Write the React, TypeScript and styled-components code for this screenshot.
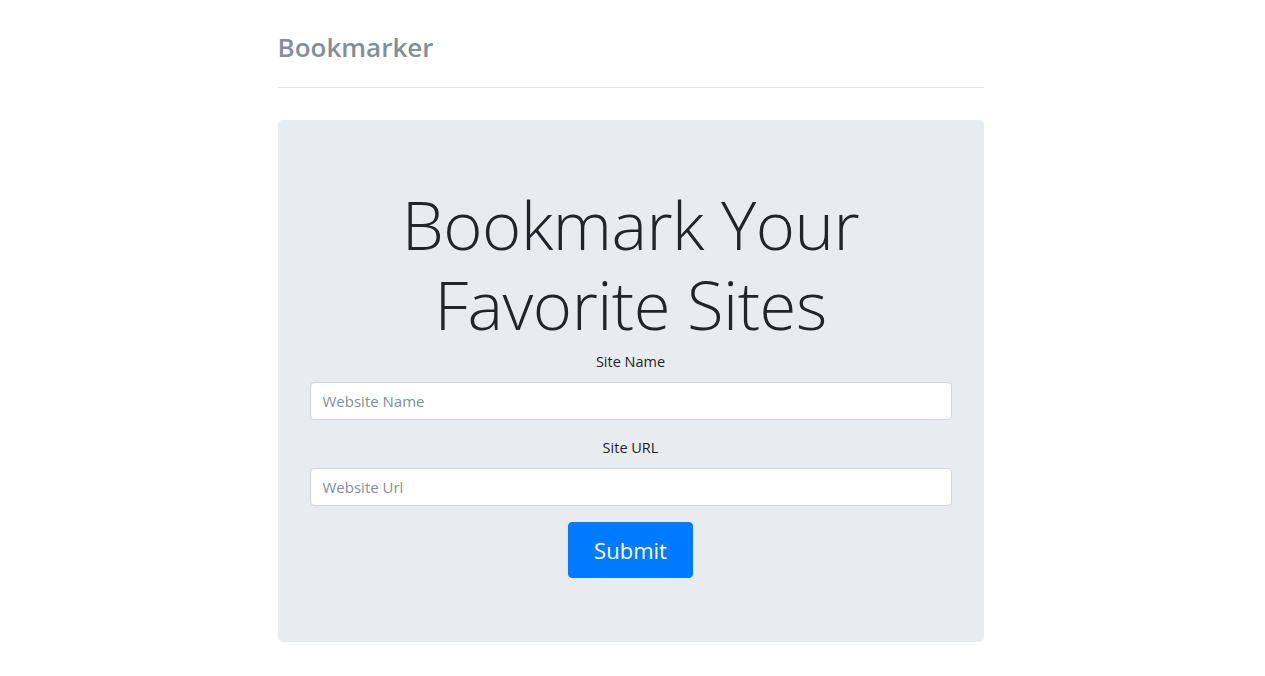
import React from "react";
import styled, {createGlobalStyle} from "styled-components";

const GlobalStyle = createGlobalStyle`
    * {
        box-sizing: border-box;
    }
    body {
        margin: 0;
        padding-right: 4px;
        background: #FFFFFF;
        color: #212529;
        font-family: "Open Sans", "Noto Sans", sans-serif;
        font-size: 16px;
        line-height: 1.5;
    }
`;

const Container = styled.div`
    width: 706px;
    margin: 0 auto;
`;

const Header = styled.header`
    padding-top: 23px;
    padding-bottom: 16px;
    margin-bottom: 32px;
    border-bottom: 1px solid #e5e5e5;
`;

const Brand = styled.h3`
    margin: 0;
    font-size: 26px;
    font-weight: 600;
    line-height: 48px;
    color: #868e96;
`;

const Jumbotron = styled.div`
    display: flex;
    flex-direction: column;
    align-items: stretch;
    padding: 64px 32px;
    background: #e9ecef;
    border-radius: 5px;
    text-align: center;
`;

const Title = styled.h1`
    margin: 0 0 6px;
    font-size: 67px;
    font-weight: 300;
    line-height: 80px;
    letter-spacing: -0.5px;
    color: #212529;
`;

const FormGroup = styled.div`
    display: flex;
    flex-direction: column;
    gap: 8px;
    margin-bottom: 16px;
`;

const Label = styled.label`
    font-size: 14.5px;
    line-height: 24px;
    color: #212529;
`;

const Input = styled.input`
    height: 38px;
    padding: 6px 12px;
    font-family: inherit;
    font-size: 15px;
    color: #495057;
    background: #FFFFFF;
    border: 1px solid #ced4da;
    border-radius: 4px;
    outline: none;
    &::placeholder {
        color: #868e96;
    }
`;

const SubmitButton = styled.button`
    align-self: center;
    width: 125px;
    height: 56px;
    font-family: inherit;
    font-size: 22px;
    color: #FFFFFF;
    background: #007bff;
    border: 1px solid #007bff;
    border-radius: 4px;
    cursor: pointer;
`;

const App = () => {
    return (
        <>
            <GlobalStyle/>
            <Container>
                <Header>
                    <Brand>Bookmarker</Brand>
                </Header>
                <Jumbotron>
                    <Title>Bookmark Your Favorite Sites</Title>
                    <form onSubmit={e => e.preventDefault()} style={{display: "contents"}}>
                        <FormGroup>
                            <Label htmlFor="siteName">Site Name</Label>
                            <Input id="siteName" type="text" placeholder="Website Name"/>
                        </FormGroup>
                        <FormGroup>
                            <Label htmlFor="siteUrl">Site URL</Label>
                            <Input id="siteUrl" type="text" placeholder="Website Url"/>
                        </FormGroup>
                        <SubmitButton type="submit">Submit</SubmitButton>
                    </form>
                </Jumbotron>
            </Container>
        </>
    );
}

export default App;
